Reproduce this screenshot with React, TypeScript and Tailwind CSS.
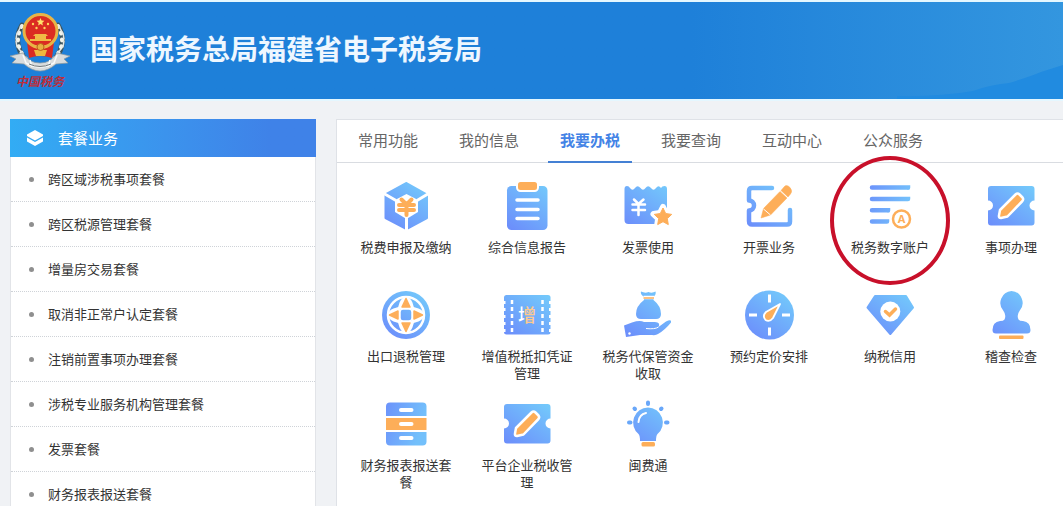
import React from "react";

type Shortcut = {
  label: string;
  icon: React.ReactNode;
  highlighted?: boolean;
};

const BLUE = "url(#iconBlue)";
const ORANGE = "#fdae59";

const packages: string[] = [
  "跨区域涉税事项套餐",
  "跨区税源管理套餐",
  "增量房交易套餐",
  "取消非正常户认定套餐",
  "注销前置事项办理套餐",
  "涉税专业服务机构管理套餐",
  "发票套餐",
  "财务报表报送套餐",
];

const tabs: string[] = [
  "常用功能",
  "我的信息",
  "我要办税",
  "我要查询",
  "互动中心",
  "公众服务",
];

const activeTab = "我要办税";

const CubeIcon = () => (
  <>
    <path
      d="M24.5 1 45 12.500V36L24.500 47 3.500 36V12.500Z"
      fill={BLUE}
      stroke={BLUE}
      strokeWidth="2"
      strokeLinejoin="round"
    />
    <path
      d="M1 11 14 18.500M47.500 11 35 18.500M24.500 34V49"
      stroke="#fff"
      strokeWidth="3"
    />
    <path d="M24.500 12 36 18V30L24.500 37 13 30V18Z" fill="#fff" />
    <path
      d="M19.500 17.500 24 22M29.500 17.500 25 22M17 23H32M17 28H32M24.500 22V33"
      stroke={ORANGE}
      strokeWidth="4"
      strokeLinecap="round"
    />
  </>
);

const ClipboardIcon = () => (
  <>
    <rect x="4" y="4" width="40.500" height="44" rx="4.500" fill={BLUE} />
    <rect
      x="14"
      y="-1"
      width="21"
      height="10"
      rx="3.500"
      fill={ORANGE}
      stroke="#fff"
      strokeWidth="2"
    />
    <path
      d="M14 18H35M14 27.500H35M14 36.500H35"
      stroke="#fff"
      strokeWidth="3.500"
      strokeLinecap="round"
    />
  </>
);

const InvoiceIcon = () => (
  <>
    <path
      d="M.5 7Q.5 4 3 4Q5 4 6 6Q8.500 9.500 11 6Q13.500 2.500 16.500 6Q19 9.500 21.500 6Q24 2.500 27 6Q29.500 9.500 32 6Q34.500 2.500 37 6Q38 4 40.500 4Q43 4 43 7V42H4.500Q.5 42 .5 38Z"
      fill={BLUE}
    />
    <path
      d="M10 17.500 14.500 22 19.500 17.500M8.500 22.500H21M8.500 28H21M14.500 22V33"
      stroke="#fff"
      strokeWidth="2.500"
      strokeLinecap="round"
      fill="none"
    />
    <path
      d="m39 25 3 6 6.500 1-4.700 4.500 1 6.500-5.800-3-5.800 3 1-6.500-4.700-4.500 6.500-1Z"
      fill="#fff"
      stroke="#fff"
      strokeWidth="6"
      strokeLinejoin="round"
    />
    <path
      d="m39 26 2.700 5.500 6 .9-4.400 4.200 1 6-5.300-2.900-5.300 2.900 1-6-4.400-4.200 6-.9Z"
      fill={ORANGE}
      stroke={ORANGE}
      strokeLinejoin="round"
    />
  </>
);

const IssueIcon = () => (
  <>
    <path
      d="M27 6H7Q4 6 4 9V18.500A5 5 0 0 1 4 28.500V39Q4 42.500 7 42.500H42Q45 42.500 45 39.500V28"
      fill="none"
      stroke={BLUE}
      strokeWidth="4.500"
      strokeLinecap="round"
      strokeLinejoin="round"
    />
    <path
      d="m16 36 2.500-9.500L35 9.500l7 6.500-16.500 17ZM36 8.500 39 5Q41.500 2 45 5.500Q48 9 45.500 12L43 15Z"
      fill={ORANGE}
      stroke={ORANGE}
      strokeWidth=".5"
      strokeLinejoin="round"
    />
    <path d="m18.500 27 7 6" stroke="#fff" strokeWidth="1" />
  </>
);

const AccountIcon = () => (
  <>
    <path
      d="M6 5.600H42V5.700M6 17H42V17.100M6 28.300H22V28.400M6 39.500H21V39.600"
      fill="none"
      stroke="url(#iconBar)"
      strokeWidth="4.500"
      strokeLinecap="round"
    />
    <circle
      cx="35.500"
      cy="37"
      r="8.500"
      fill="#fff"
      stroke={ORANGE}
      strokeWidth="2.500"
    />
    <text
      x="35.500"
      y="41"
      textAnchor="middle"
      className="font-sans text-[11px] font-bold"
      fill={ORANGE}
    >
      A
    </text>
  </>
);

const TicketIcon = () => (
  <>
    <path
      d="M4 4H44.500Q47.500 4 47.500 7V18.500A5 5 0 0 0 47.500 28.500V40.500Q47.500 43.500 44.500 43.500H4Q1 43.500 1 40.500V28.500A5 5 0 0 0 1 18.500V7Q1 4 4 4Z"
      fill={BLUE}
    />
    <path
      d="M13 28 28.500 12.500Q30.500 10.500 32.500 12.500L35.500 15.500Q37 17.500 35 19.500L20.500 34.500 14 36Q11.500 36 12 33.500Z"
      fill={ORANGE}
      stroke="#fff"
      strokeWidth="2.500"
      strokeLinejoin="round"
    />
  </>
);

const GlobeIcon = () => (
  <>
    <circle cx="24" cy="24" r="24" fill={BLUE} />
    <g fill="none" stroke="#fff" strokeWidth="2.500">
      <circle cx="24" cy="24" r="18" />
      <ellipse cx="24" cy="24" rx="7.500" ry="17" />
      <ellipse cx="24" cy="24" rx="17" ry="7.500" />
    </g>
    <path
      d="M24 6Q30 11 30.500 18H17.500Q18 11 24 6ZM24 42Q30 37 30.500 30H17.500Q18 37 24 42ZM6 24Q11 18 18 17.500V30.500Q11 30 6 24ZM42 24Q37 18 30 17.500V30.500Q37 30 42 24Z"
      fill="#fff"
    />
    <path
      d="M24 7.500 28 16H20ZM24 40.500 28 32H20ZM7.500 24 16 20V28ZM40.500 24 32 20V28Z"
      fill={ORANGE}
      stroke={ORANGE}
      strokeWidth="1.500"
      strokeLinejoin="round"
    />
    <rect
      x="18"
      y="18"
      width="12"
      height="12"
      rx="3"
      fill={BLUE}
      stroke="#fff"
      strokeWidth="1.500"
    />
  </>
);

const VatIcon = () => (
  <>
    <rect x="1" y="4" width="46.500" height="39.500" rx="2.500" fill={BLUE} />
    <path
      d="M1 10V42M47.500 10V42"
      stroke="#fff"
      strokeWidth="3"
      strokeDasharray="3 4"
      strokeLinecap="butt"
    />
    <path
      d="M9 9V41M39.500 9V41"
      stroke="#fff"
      strokeWidth="2.500"
      strokeDasharray="4 3"
    />
    <text
      x="24"
      y="30.500"
      textAnchor="middle"
      className="text-[18px] font-medium"
      fill="url(#iconSplit)"
    >
      增
    </text>
  </>
);

const FundIcon = () => (
  <>
    <path
      d="M17 .5Q21 2.500 24.500 1Q28 2.500 31.500 .5Q32.500 3 29.500 6V9Q37 15 37 23Q37 28 32 28H17Q12 28 12 23Q12 15 20 9V6Q16 3 17 .5Z"
      fill={BLUE}
    />
    <path d="M19.500 6.500H30" stroke="#fff" strokeWidth="3.500" />
    <path d="M19.500 7H30" stroke={ORANGE} strokeWidth="1.500" />
    <path
      d="M0 34.500 8 31.500Q16 29 20 31H31Q37 31.500 34.500 36L42 30.500Q48 27.500 47 31.500Q41 39 34 43Q32 44.500 28 44H16L2 46Z"
      fill={BLUE}
    />
    <path d="M22 37.500Q31 38.500 34.500 36" stroke="#fff" strokeWidth="1" fill="none" />
    <circle cx="5.500" cy="42.500" r="1.200" fill="#fff" />
  </>
);

const GaugeIcon = () => (
  <>
    <circle cx="24.500" cy="24" r="24.500" fill={BLUE} />
    <path
      d="M24.500 3.500V11.500M24.500 36.500V44.500M4 24H12M37 24H45"
      stroke="#fff"
      strokeWidth="3"
    />
    <path
      d="M35 13 28 27Q24.500 31.500 20.500 29Q17 25 21 21Z"
      fill={ORANGE}
      stroke="#fff"
      strokeWidth="1.800"
      strokeLinejoin="round"
    />
  </>
);

const CreditIcon = () => (
  <>
    <path
      d="M9 5H40L47 16.500 24.300 43 1.500 16.500Z"
      fill={BLUE}
      stroke={BLUE}
      strokeWidth="2"
      strokeLinejoin="round"
    />
    <circle cx="24.300" cy="20.500" r="10" fill="#fff" />
    <path
      d="m19.500 20.500 4 3.500 6-6"
      fill="none"
      stroke={ORANGE}
      strokeWidth="3.500"
      strokeLinecap="round"
    />
  </>
);

const StampIcon = () => (
  <>
    <path
      d="M24.500 0A12 12 0 0 1 32.500 20Q29.500 24 31.500 28.500Q32.500 30 36 30Q43.500 31 43.500 39Q43.500 42.500 40 42.500H9Q5.500 42.500 5.500 39Q5.500 31 13 30Q16.500 30 17.500 28.500Q19.500 24 16.500 20A12 12 0 0 1 24.500 0Z"
      fill={BLUE}
    />
    <rect x="12" y="44.500" width="24.500" height="3.500" rx="1" fill={ORANGE} />
  </>
);

const CabinetIcon = () => (
  <>
    <path
      d="M4 16V6.500Q4 2.500 8 2.500H40.500Q44.500 2.500 44.500 6.500V16Z"
      fill="url(#iconBar)"
    />
    <rect x="4" y="18" width="40.500" height="12" fill={ORANGE} />
    <path
      d="M4 32H44.500V41.500Q44.500 45.500 40.500 45.500H8Q4 45.500 4 41.500Z"
      fill="url(#iconBar)"
    />
    <path
      d="M19 10H29.500M19 24H29.500M19 38H29.500"
      stroke="#fff"
      strokeWidth="4"
      strokeLinecap="round"
    />
  </>
);

const BulbIcon = () => (
  <>
    <path
      d="M24 7.500A15 15 0 0 1 33.500 34Q32 35.500 32 41H16Q16 35.500 14.500 34A15 15 0 0 1 24 7.500Z"
      fill={BLUE}
    />
    <path
      d="M14.500 22Q15 14.500 22 13"
      fill="none"
      stroke="#fff"
      strokeWidth="2"
      strokeLinecap="round"
    />
    <rect x="17.500" y="42" width="13.500" height="4.500" rx="1.500" fill={ORANGE} />
    <path
      d="M24 2.500V4M10.500 8.500 11 9M37.500 8.500 37 9M5 22.500H6.500M42 22.500H43.500"
      stroke="#69a7f9"
      strokeWidth="4"
      strokeLinecap="round"
    />
  </>
);

const shortcuts: Shortcut[] = [
  { label: "税费申报及缴纳", icon: <CubeIcon /> },
  { label: "综合信息报告", icon: <ClipboardIcon /> },
  { label: "发票使用", icon: <InvoiceIcon /> },
  { label: "开票业务", icon: <IssueIcon /> },
  { label: "税务数字账户", icon: <AccountIcon />, highlighted: true },
  { label: "事项办理", icon: <TicketIcon /> },
  { label: "出口退税管理", icon: <GlobeIcon /> },
  { label: "增值税抵扣凭证管理", icon: <VatIcon /> },
  { label: "税务代保管资金收取", icon: <FundIcon /> },
  { label: "预约定价安排", icon: <GaugeIcon /> },
  { label: "纳税信用", icon: <CreditIcon /> },
  { label: "稽查检查", icon: <StampIcon /> },
  { label: "财务报表报送套餐", icon: <CabinetIcon /> },
  { label: "平台企业税收管理", icon: <TicketIcon /> },
  { label: "闽费通", icon: <BulbIcon /> },
];

// Gradients shared by all shortcut icons (48 x 48 grid)
const IconGradients = () => (
  <svg className="absolute size-0" aria-hidden="true">
    <defs>
      <linearGradient id="iconBlue" gradientUnits="userSpaceOnUse" x1="8" y1="46" x2="40" y2="2">
        <stop offset="0" stopColor="#6c8ffb" />
        <stop offset="1" stopColor="#73c8fb" />
      </linearGradient>
      <linearGradient id="iconBar" gradientUnits="userSpaceOnUse" x1="4" y1="0" x2="44" y2="12">
        <stop offset="0" stopColor="#6c92fb" />
        <stop offset="1" stopColor="#73c0fb" />
      </linearGradient>
      <linearGradient id="iconSplit">
        <stop offset="0.36" stopColor="#fff" />
        <stop offset="0.36" stopColor="#ffc98d" />
      </linearGradient>
    </defs>
  </svg>
);

const Emblem = () => (
  <svg viewBox="0 0 60 60" className="h-[60px] w-[60px]" aria-hidden="true">
    {/* wheat ears */}
    <g fill="none" strokeLinecap="round">
      <path d="M12 13Q1 32 17 49M48 13Q59 32 43 49" stroke="#3c5560" strokeWidth="5" />
      <path
        d="M12 14Q2 32 17 48M48 14Q58 32 43 48"
        stroke="#f1f3ea"
        strokeWidth="4"
        strokeDasharray="1 6"
      />
      <path d="m11 14-3 6M7 21l-1 6M6 29l1 6M9 37l4 5M49 14l3 6M53 21l1 6M54 29l-1 6M51 37l-4 5" stroke="#dfe5e6" strokeWidth="1.500" />
    </g>
    {/* ribbon */}
    <path
      d="M0 44 13 41Q19 51 30 51Q41 51 47 41L60 44 54 47 58 51 46 52Q38 59 30 59Q22 59 14 52L2 51 6 47Z"
      fill="#d9dcdd"
      stroke="#8e999e"
      strokeWidth=".7"
    />
    <path d="M13 43 16 51Q30 59 44 51L47 43M20 48 22 55M40 48 38 55" fill="none" stroke="#f8fafa" strokeWidth="1.500" />
    <path d="M19 52Q30 57 41 52" fill="none" stroke="#747b7d" />
    {/* national emblem */}
    <path d="M17 30H44L42 46Q30 42 19 46Z" fill="#d92b23" />
    <path d="M24 38H37L35 44H26Z" fill="#efb83e" />
    <circle cx="30.500" cy="19" r="16.500" fill="#db2c22" stroke="#e9b446" strokeWidth="3" />
    <path d="m30.500 6 1.100 2.600 2.800.2-2.100 1.900.6 2.700-2.400-1.400-2.400 1.400.6-2.700-2.100-1.900 2.800-.2Z" fill="#ffe26c" />
    <g fill="#ffd55d">
      <circle cx="23" cy="12" r="1.200" />
      <circle cx="38" cy="12" r="1.200" />
      <circle cx="26.500" cy="16" r="1.200" />
      <circle cx="34.500" cy="16" r="1.200" />
    </g>
    <path d="M25 22H36L38 24H36V27H41V29H20V27H25V24H23Z" fill="#f0bb45" />
    <circle cx="30.500" cy="35" r="3.500" fill="#e8b041" stroke="#bb661c" />
  </svg>
);

const LayersIcon = () => (
  <svg viewBox="0 0 18 18" className="size-[18px]" aria-hidden="true">
    <path d="M9 1 17 5.500V7L9 11.500 1 7V5.500Z" fill="#fff" />
    <path d="m1 8.500 8 4.500 8-4.500V12.500L9 17 1 12.500Z" fill="#fff" />
  </svg>
);

const Header: React.FC = () => (
  <header className="relative h-[101px] shrink-0 border-y-2 border-[#e4f7ff] bg-linear-to-r from-[#1e80d9] from-65% to-[#3396df]">
    <svg
      viewBox="0 0 166 34"
      preserveAspectRatio="none"
      className="absolute right-0 bottom-0 h-[34px] w-[166px]"
      aria-hidden="true"
    >
      <path
        d="M0 31Q42 32 76 26Q92 20 112 18Q132 12 144 7L166 0V34H0Z"
        fill="#218be0"
      />
    </svg>
    <div className="flex items-start pt-2.5 pl-2.5">
      <div className="flex w-[60px] flex-col items-center">
        <Emblem />
        <span className="text-[12px] leading-[18px] font-bold text-[#bd2d3a] italic">
          中国税务
        </span>
      </div>
      <h1 className="ml-5 pt-4 text-[28px] leading-[40px] font-bold text-[#eef7ff]">
        国家税务总局福建省电子税务局
      </h1>
    </div>
  </header>
);

const Sidebar: React.FC = () => (
  <aside className="w-[306px] shrink-0 border-x border-[#e2e4e8] bg-white">
    <h2 className="-mx-px flex h-[38px] items-center gap-3.5 bg-linear-to-r from-[#32acf4] to-[#3f82e8] to-85% pl-4 text-[15px] text-white">
      <LayersIcon />
      套餐业务
    </h2>
    <ul>
      {packages.map((name) => (
        <li
          key={name}
          className="h-[45px] border-b border-dotted border-[#cfd3d8]"
        >
          <a
            href="#"
            className="flex h-full items-center gap-3.5 pl-[18px] text-[13px] text-[#333]"
          >
            <span className="size-[5px] rounded-full bg-[#8f8f8f]" />
            {name}
          </a>
        </li>
      ))}
    </ul>
  </aside>
);

const Tabs: React.FC = () => (
  <nav className="flex h-[43px] gap-[17px] border-b border-[#d9dce1] pl-[9px]">
    {tabs.map((tab) => (
      <button
        key={tab}
        type="button"
        className={
          tab === activeTab
            ? "-mb-px border-b-2 border-[#4480d4] px-3 text-[15px] font-bold text-[#4383e6]"
            : "-mb-px border-b-2 border-transparent px-3 text-[15px] text-[#666]"
        }
      >
        {tab}
      </button>
    ))}
  </nav>
);

const App: React.FC = () => {
  return (
    <div className="flex h-screen flex-col overflow-hidden bg-[#f0f2f5] font-['Noto_Sans_CJK_SC',sans-serif]">
      <IconGradients />
      <Header />
      <main className="flex min-h-0 flex-1 gap-5 pt-[18px] pl-2.5">
        <Sidebar />
        <section className="min-w-0 flex-1 border-t border-l border-[#dfe2e7] bg-white">
          <Tabs />
          <div className="grid grid-cols-6 gap-x-[25px] gap-y-[18px] pt-[19px] pr-1 pl-[21px]">
            {shortcuts.map((item) => (
              <a
                key={item.label}
                href="#"
                className="relative flex min-h-[91px] flex-col items-center gap-2 text-center text-[13px] leading-[17px] text-[#333]"
              >
                <svg
                  viewBox="0 0 48 48"
                  className="size-12 shrink-0 overflow-visible"
                  fill="none"
                  aria-hidden="true"
                >
                  {item.icon}
                </svg>
                <span>{item.label}</span>
                {item.highlighted && (
                  <span className="pointer-events-none absolute -inset-x-3 -top-[26px] h-[129px] rounded-[50%] border-4 border-[#c8102a]" />
                )}
              </a>
            ))}
          </div>
        </section>
      </main>
    </div>
  );
};

export default App;
